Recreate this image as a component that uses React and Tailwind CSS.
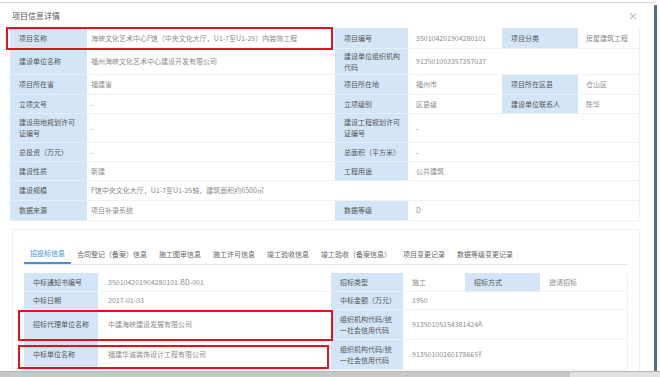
import React from 'react';

// l = label cell, v = value cell, s = column span
const topRows = [
  { h: 'h-[21px]', cells: [{ l: '项目名称' }, { v: '海峡文化艺术中心F馆（中央文化大厅，U1-7至U1-25）内装饰工程' }, { l: '项目编号' }, { v: '350104201904280101' }, { l: '项目分类' }, { v: '房屋建筑工程' }] },
  { h: 'h-[26px]', cells: [{ l: '建设单位名称' }, { v: '福州海峡文化艺术中心建设开发有限公司' }, { l: '建设单位组织机构\n代码' }, { v: '913501003357357037', s: 3 }] },
  { h: 'h-[20px]', cells: [{ l: '项目所在省' }, { v: '福建省' }, { l: '项目所在地' }, { v: '福州市' }, { l: '项目所在区县' }, { v: '仓山区' }] },
  { h: 'h-[19px]', cells: [{ l: '立项文号' }, { v: '-' }, { l: '立项级别' }, { v: '区县级' }, { l: '建设单位联系人' }, { v: '陈华' }] },
  { h: 'h-[29px]', cells: [{ l: '建设用地规划许可\n证编号' }, { v: '-' }, { l: '建设工程规划许可\n证编号' }, { v: '-', s: 3 }] },
  { h: 'h-[19px]', cells: [{ l: '总投资（万元）' }, { v: '-' }, { l: '总面积（平方米）' }, { v: '-', s: 3 }] },
  { h: 'h-[19px]', cells: [{ l: '建设性质' }, { v: '新建' }, { l: '工程用途' }, { v: '公共建筑', s: 3 }] },
  { h: 'h-[20px]', cells: [{ l: '建设规模' }, { v: 'F馆中央文化大厅，U1-7至U1-25轴，建筑面积约6500㎡' }, { v: '', s: 4 }] },
  { h: 'h-[20px]', cells: [{ l: '数据来源' }, { v: '项目补录系统' }, { l: '数据等级' }, { v: 'D', s: 3 }] },
];

const bidRows = [
  { h: 'h-[19px]', cells: [{ l: '中标通知书编号' }, { v: '350104201904280101-BD-001' }, { l: '招标类型' }, { v: '施工' }, { l: '招标方式' }, { v: '邀请招标' }] },
  { h: 'h-[18px]', cells: [{ l: '中标日期' }, { v: '2017-01-03' }, { l: '中标金额（万元）' }, { v: '1950', s: 3 }] },
  { h: 'h-[30px]', cells: [{ l: '招标代理单位名称' }, { v: '中建海峡建设发展有限公司' }, { l: '组织机构代码/统\n一社会信用代码' }, { v: '91350105154381424A', s: 3 }] },
  { h: 'h-[30px]', cells: [{ l: '中标单位名称' }, { v: '福建华诚装饰设计工程有限公司' }, { l: '组织机构代码/统\n一社会信用代码' }, { v: '91350100260178665Y', s: 3 }] },
];

const tabs = ['招投标信息', '合同登记（备案）信息', '施工图审信息', '施工许可信息', '竣工验收信息', '竣工验收（备案信息）', '项目变更记录', '数据等级变更记录'];

const spanClass = { 1: '', 3: 'col-span-3', 4: 'col-span-4' };

function InfoRow({ row, cols, firstPad, pad }) {
  return (
    <div className={`grid ${cols} ${row.h}`}>
      {row.cells.map((cell, i) => {
        if (cell.l !== undefined) {
          return (
            <div key={i} className="flex items-center pl-[9px] bg-[#d3e5f7] text-[#555] leading-[11px] whitespace-pre-line border-b border-[#e6eef7]">
              {cell.l}
            </div>
          );
        }
        return (
          <div key={i} className={`flex items-center ${spanClass[cell.s || 1]} ${i === 1 ? firstPad : pad} text-[#8c8c8c] border-b border-[#eff1f4] whitespace-nowrap`}>
            {cell.v}
          </div>
        );
      })}
    </div>
  );
}

export default function App() {
  return (
    <div className="w-[660px] h-[377px] overflow-hidden bg-white flex flex-col font-['Noto_Sans_CJK_SC','Noto_Sans',sans-serif] text-[7px] relative">
      <div className="h-[2px] shrink-0" />
      <div className="h-[1px] w-[656px] bg-[#d9d9d9] shrink-0" />
      <div className="flex flex-1 min-h-0">
        <div className="w-[654px] flex flex-col">
          <div className="h-[25px] flex items-center justify-between pl-[12px] pr-[16px] shrink-0">
            <span className="text-[8px] text-[#555]">项目信息详情</span>
            <span className="text-[10px] text-[#aaa] leading-none">×</span>
          </div>

          <div className="ml-[10px] w-[630px] border-r border-[#eff1f4]">
            {topRows.map((row, i) => (
              <InfoRow key={i} row={row} cols="grid-cols-[77px_248px_73px_94px_76px_62px]" firstPad="pl-[4px]" pad="pl-[8px]" />
            ))}
          </div>

          <div className="ml-[12px] mt-[8px] w-[628px] flex-1 border border-b-0 border-[#f0f0f0] px-[11px] pt-[14px]">
            <div className="flex border-b border-[#e8e8e8] h-[21px]">
              {tabs.map((t, i) => (
                <div
                  key={t}
                  className={`px-[6px] flex items-center ${i === 0 ? 'text-[#4a90d9] border-b-2 border-[#4a90d9]' : 'text-[#666]'}`}
                >
                  {t}
                </div>
              ))}
            </div>
            <div className="mt-[8px] w-[604px] border-r border-[#eff1f4]">
              {bidRows.map((row, i) => (
                <InfoRow key={i} row={row} cols="grid-cols-[74px_233px_72px_62px_75px_88px]" firstPad="pl-[10px]" pad="pl-[9px]" />
              ))}
            </div>
          </div>
        </div>
        <div className="w-[3px] mt-[2px] bg-[#4f6f84] shrink-0" />
        <div className="flex-1" />
      </div>
      <div className="h-[6px] shrink-0 flex border-t border-[#b5b5b5]">
        <div className="w-[570px] bg-[#c8c8c8]" />
        <div className="flex-1 bg-[#e2e2e2]" />
      </div>

      {/* red annotation boxes */}
      <div className="absolute left-[6px] top-[27px] w-[327px] h-[23px] border-2 border-[#e3121b]" />
      <div className="absolute left-[18px] top-[310px] w-[315px] h-[31px] border-2 border-[#e3121b]" />
      <div className="absolute left-[18px] top-[345px] w-[311px] h-[24px] border-2 border-[#e3121b]" />
    </div>
  );
}
